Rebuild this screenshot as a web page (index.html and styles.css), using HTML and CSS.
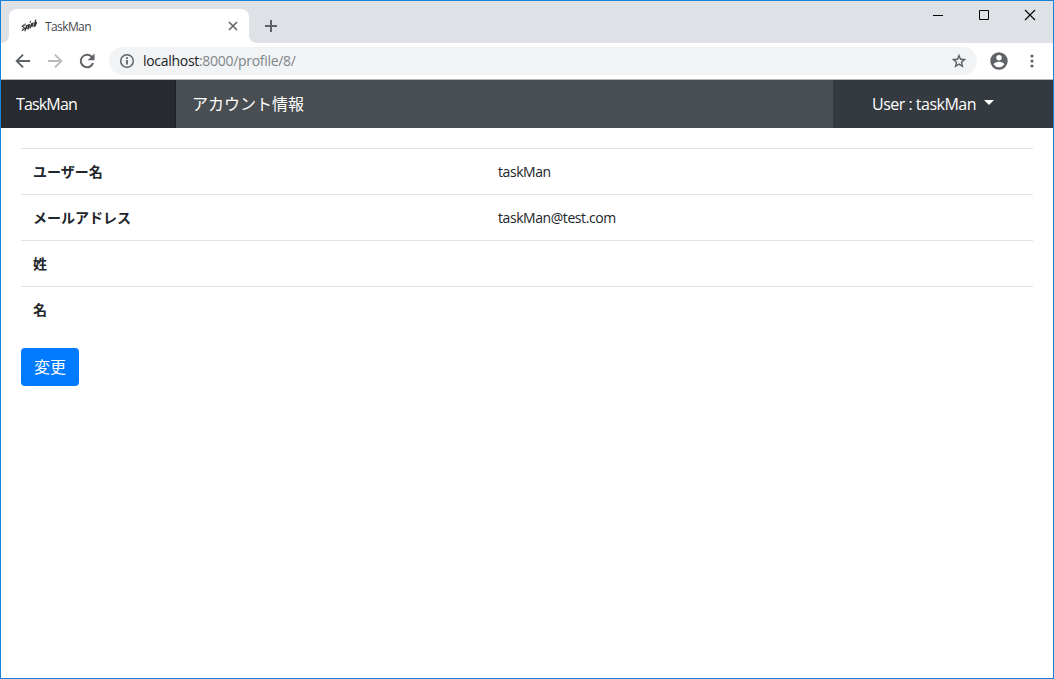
FILE: index.html
```html
<!DOCTYPE html>
<html lang="ja">
<head>
  <meta charset="UTF-8" />
  <meta name="viewport" content="width=device-width, initial-scale=1.0"/>
  <title>TaskMan</title>
  <link rel="stylesheet" href="styles.css">
</head>
<body>
  <div class="window">
    <div class="titlebar">
      <div class="tab">
        <svg class="favicon" width="16" height="16" viewBox="0 0 16 16" fill="none" stroke="#333" stroke-width="1.2">
          <path d="M4.600 6.400 1.400 8.200 3.600 10.200 1 12.800M5.800 7 3.800 13.200M5.600 7.800l1.800-.8-.6 2.800-1.800.6M8.800 6.200 7.200 11M9.800 3.200l-.8 1.400M9 10.400l1.600-4.600 1.400-.6-1.200 4M12.800 9 14.800 1.600M13.200 5.800l2.400-1.400-1.600 4"/>
          <path stroke="#999" stroke-width=".7" d="M1.400 7.200l3.600-2M.6 11.200l2.400-3M5.600 12l4-2"/>
        </svg>
        <span class="tab-title">TaskMan</span>
        <svg class="tab-close" width="10" height="10" viewBox="0 0 10 10" fill="none" stroke="#5f6368" stroke-width="1.6">
          <path d="M1 1l8 8M9 1L1 9"/>
        </svg>
      </div>
      <svg class="new-tab" width="12" height="12" viewBox="0 0 12 12" fill="none" stroke="#5f6368" stroke-width="2">
        <path d="M6 0v12M0 6h12"/>
      </svg>
      <div class="window-controls">
        <svg width="46" height="29" viewBox="0 0 46 29"><path d="M18 14h10v1H18z"/></svg>
        <svg width="46" height="29" viewBox="0 0 46 29" fill="none" stroke="#000"><path d="M18.500 9.500h9v9h-9z"/></svg>
        <svg width="46" height="29" viewBox="0 0 46 29" fill="none" stroke="#000" stroke-width="1.1"><path d="M18 9l10 10M28 9L18 19"/></svg>
      </div>
    </div>

    <div class="toolbar">
      <svg class="nav-icon" width="20" height="20" viewBox="0 0 24 24" fill="#5f6368"><path d="M20.500 10.800H7.200l5.700-5.700L11.300 3.500 2.800 12l8.500 8.500 1.600-1.600-5.700-5.700h13.300z"/></svg>
      <svg class="nav-icon" width="20" height="20" viewBox="0 0 24 24" fill="#bababa"><path d="M3.500 10.800h13.300l-5.700-5.700 1.600-1.600 8.500 8.500-8.500 8.500-1.600-1.600 5.700-5.700H3.500z"/></svg>
      <svg class="nav-icon" width="20" height="20" viewBox="0 0 24 24" fill="#5f6368"><path d="M18.200 5.800A8.700 8.700 0 1 0 20.500 14.500h-2.600A6.300 6.300 0 1 1 16.500 7.500L12.800 11.200h8.200V3z"/></svg>
      <div class="address">
        <svg class="info" width="16" height="16" viewBox="0 0 16 16" fill="#5f6368">
          <circle cx="8" cy="8" r="6.300" fill="none" stroke="#5f6368" stroke-width="1.500"/>
          <path d="M7.100 7h1.800v4.500H7.100zM7.100 4.200h1.800v1.700H7.100z"/>
        </svg>
        <span class="url"><b>localhost</b>:8000/profile/8/</span>
        <svg class="star" width="16" height="16" viewBox="0 0 24 24" fill="#5f6368"><path d="M23 9.100l-8-.7L12 1 9 8.400l-8 .7 6.100 5.200L5.300 22 12 17.900l6.700 4.100-1.800-7.700zM12 15.400l-3.500 2.100.9-4-3-2.700 4-.3L12 6.700l1.600 3.800 4 .3-3 2.700.9 4z"/></svg>
      </div>
      <svg class="profile" width="22" height="22" viewBox="0 0 24 24" fill="#5f6368"><path d="M12 2.500a9.500 9.500 0 1 0 0 19 9.500 9.500 0 0 0 0-19zm0 2.900a3 3 0 1 1 0 6 3 3 0 0 1 0-6zm0 13.300a6.800 6.800 0 0 1-5.700-3c0-1.900 3.800-2.900 5.700-2.900s5.700 1 5.700 2.900a6.800 6.800 0 0 1-5.700 3z"/></svg>
      <svg class="menu" width="4" height="14" viewBox="0 0 4 14" fill="#5f6368"><circle cx="2" cy="2" r="1.600"/><circle cx="2" cy="7" r="1.600"/><circle cx="2" cy="12" r="1.600"/></svg>
    </div>

    <nav class="navbar">
      <a class="brand" href="#">TaskMan</a>
      <div class="page-title">アカウント情報</div>
      <div class="user"><span>User : taskMan</span><i class="caret"></i></div>
    </nav>

    <main>
      <table>
        <tr>
          <th>ユーザー名</th>
          <td>taskMan</td>
        </tr>
        <tr>
          <th>メールアドレス</th>
          <td>taskMan@test.com</td>
        </tr>
        <tr>
          <th>姓</th>
          <td></td>
        </tr>
        <tr>
          <th>名</th>
          <td></td>
        </tr>
      </table>
      <button class="btn" type="button">変更</button>
    </main>
  </div>
</body>
</html>
```
FILE: styles.css
```css
* {
  margin: 0;
  padding: 0;
  box-sizing: border-box;
}

body {
  height: 100vh;
  overflow: hidden;
  font-family: "Open Sans", "Noto Sans CJK JP", sans-serif;
  color: #212529;
}

svg {
  display: block;
  flex: none;
}

.window {
  height: 100%;
  border: 1px solid #1883d7;
  background: #fff;
}

/* Browser frame */
.titlebar {
  height: 42px;
  display: flex;
  align-items: flex-start;
  background: #dee1e6;
}

.tab {
  position: relative;
  width: 240px;
  height: 34px;
  margin: 8px 0 0 8px;
  padding: 0 11px 0 12px;
  display: flex;
  align-items: center;
  background: #fff;
  border-radius: 8px 8px 0 0;
}

.tab::before,
.tab::after {
  content: "";
  position: absolute;
  bottom: 0;
  width: 8px;
  height: 8px;
}

.tab::before {
  left: -8px;
  background: radial-gradient(circle at 0 0, #dee1e6 7.5px, #fff 8.5px);
}

.tab::after {
  right: -8px;
  background: radial-gradient(circle at 100% 0, #dee1e6 7.5px, #fff 8.5px);
}

.tab-title {
  flex: 1;
  margin-left: 8px;
  font-size: 12px;
  letter-spacing: -0.6px;
  color: #45494d;
}

.new-tab {
  margin: 19px 0 0 16px;
}

.window-controls {
  display: flex;
  margin-left: auto;
}

.toolbar {
  height: 37px;
  display: flex;
  align-items: center;
  padding-left: 12px;
  border-bottom: 1px solid #b6b4b6;
}

.nav-icon {
  margin-right: 12px;
}

.address {
  width: 868px;
  height: 28px;
  display: flex;
  align-items: center;
  padding: 0 10px;
  border-radius: 14px;
  background: #f1f3f4;
}

.url {
  flex: 1;
  margin: -1px 0 0 8px;
  font-size: 14px;
  letter-spacing: -0.3px;
  color: #80868b;
}

.url b {
  font-weight: normal;
  color: #202124;
}

.profile {
  margin-left: 11px;
}

.menu {
  margin-left: 20px;
}

/* App header */
.navbar {
  height: 48px;
  display: flex;
  align-items: stretch;
  line-height: 48px;
  font-size: 16px;
  color: #fff;
  background: #343a40;
}

.brand {
  width: 175px;
  padding-left: 15px;
  color: #fff;
  text-decoration: none;
  letter-spacing: -0.85px;
  background: #272b30;
  border-right: 1px solid #1d2124;
}

.page-title {
  flex: 1;
  padding-left: 16px;
  background: #494e52;
}

.user {
  width: 220px;
  display: flex;
  align-items: center;
  padding-left: 39px;
  letter-spacing: -0.5px;
}

.caret {
  margin: -3px 0 0 8px;
  border-top: 5px solid #fff;
  border-left: 5px solid transparent;
  border-right: 5px solid transparent;
}

/* Account table */
main {
  padding: 20px;
}

table {
  width: 100%;
  table-layout: fixed;
  border-collapse: collapse;
  font-size: 14px;
}

th,
td {
  height: 46px;
  padding: 0 12px;
  border-top: 1px solid #dee2e6;
  text-align: left;
  line-height: 21px;
}

th {
  width: 465px;
  font-weight: bold;
}

td {
  letter-spacing: -0.43px;
}

.btn {
  display: block;
  width: 58px;
  height: 38px;
  margin-top: 15px;
  padding-bottom: 2px;
  border: none;
  border-radius: 4px;
  background: #007bff;
  color: #fff;
  font-family: inherit;
  font-size: 16px;
}
```
